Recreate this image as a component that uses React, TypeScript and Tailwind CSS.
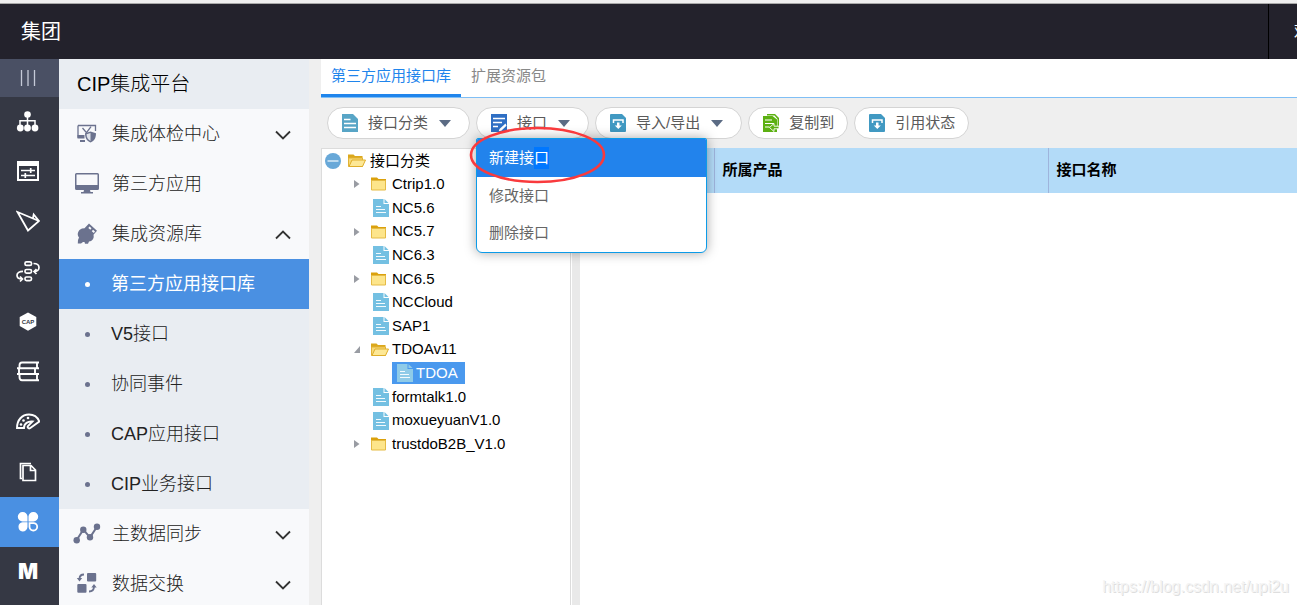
import { useState } from 'react'
import type { ReactNode } from 'react'
import clsx from 'clsx'

type TreeNode = { name: string; kind: 'folder' | 'open' | 'doc'; level: number }

const TREE: TreeNode[] = [
  { name: '接口分类', kind: 'open', level: 0 },
  { name: 'Ctrip1.0', kind: 'folder', level: 1 },
  { name: 'NC5.6', kind: 'doc', level: 1 },
  { name: 'NC5.7', kind: 'folder', level: 1 },
  { name: 'NC6.3', kind: 'doc', level: 1 },
  { name: 'NC6.5', kind: 'folder', level: 1 },
  { name: 'NCCloud', kind: 'doc', level: 1 },
  { name: 'SAP1', kind: 'doc', level: 1 },
  { name: 'TDOAv11', kind: 'open', level: 1 },
  { name: 'TDOA', kind: 'doc', level: 2 },
  { name: 'formtalk1.0', kind: 'doc', level: 1 },
  { name: 'moxueyuanV1.0', kind: 'doc', level: 1 },
  { name: 'trustdoB2B_V1.0', kind: 'folder', level: 1 },
]

const SUB_ITEMS = ['第三方应用接口库', 'V5接口', '协同事件', 'CAP应用接口', 'CIP业务接口']

// Left rail icons, 24x24
const RAIL: { label: string; icon: ReactNode }[] = [
  {
    label: '组织',
    icon: (
      <>
        <path d="M11.5 5v10M4 16v-5.3h15V16" strokeWidth="1.5" />
        <g fill="#fff" stroke="none">
          <circle cx="11.5" cy="4.5" r="3.3" />
          <circle cx="4.3" cy="18" r="3.4" />
          <circle cx="11.5" cy="18" r="3.4" />
          <circle cx="19" cy="18" r="3.4" />
        </g>
      </>
    ),
  },
  {
    label: '设置',
    icon: (
      <>
        <path d="M1 1h22v20H1zM3 6v13h18V6z" fill="#fff" fillRule="evenodd" stroke="none" />
        <path d="M5 10.5h14M5 15.5h14M14.7 8v5M9.3 13v5" strokeWidth="1.7" />
      </>
    ),
  },
  { label: '发送', icon: <path d="M1.5 2 23 11 12 20.5zM16.7 9.2l1-4.700L23 11" strokeWidth="1.800" /> },
  {
    label: '流程',
    icon: (
      <>
        <rect x="9" y="1.800" width="6.500" height="3.600" rx="1.500" />
        <rect x="9" y="9.500" width="6.500" height="3.600" rx="1.500" />
        <rect x="9" y="17" width="6.500" height="3.600" rx="1.500" />
        <path d="M17.500 3.500c3.500 0 5.500 1.700 5.500 4s-2 4-4.500 4M20.500 9l-2.500 2.500 2.500 2.500M7 11.300c-3.500 0-6 1.500-6 4 0 2.200 1.500 3.700 5 3.700M4 16.500l2.500 2.500L4 21.500" />
      </>
    ),
  },
  {
    label: 'CAP',
    icon: (
      <>
        <path d="M12 2.500 20.300 7v9L12 20.800 3.700 16V7z" fill="#fff" stroke="none" />
        <text x="12" y="14" fontSize="6" fontWeight="700" textAnchor="middle" fill="#353844" stroke="none">CAP</text>
      </>
    ),
  },
  {
    label: '文库',
    icon: (
      <path
        d="M23 2.500H6q-2.500 0-2.500 3v2.700M21 2.500v5.700M1 8.200h22M3 8.200v5.800M19 8.200v5.800M1 14h22M3.500 14v3q0 3.200 2.500 3.200h17M21 14v6"
        strokeWidth="1.900"
      />
    ),
  },
  {
    label: '仪表',
    icon: (
      <>
        <path d="M1 18c0-8 5-13.500 12-13.500 4.500 0 8.500 2.500 10.300 7L14 18.200c-1.500.800-3-.700-2-2.200l4.500-4.500C12 11 8 13.500 8 18z" strokeWidth="1.900" />
        <g fill="#fff" stroke="none">
          <circle cx="5" cy="14.500" r="1.300" />
          <circle cx="7.500" cy="10.500" r="1.300" />
          <circle cx="12" cy="8" r="1.300" />
        </g>
      </>
    ),
  },
  {
    label: '文档',
    icon: <path d="M7 5.500h8l4.500 4.500v10.500H7zM14.500 6v4.500h5M6 18.500H4.500V3.500h10.500" strokeWidth="1.700" />,
  },
  {
    label: '应用',
    icon: (
      <>
        <g fill="#fff" stroke="none">
          <path d="M6.500 2a4.700 4.700 0 0 0 0 9.400h5V6.500A4.700 4.700 0 0 0 6.500 2z" />
          <path d="M17.500 2a4.700 4.700 0 0 1 0 9.400h-5V6.500A4.700 4.700 0 0 1 17.500 2z" />
          <path d="M6.500 21.500a4.700 4.700 0 0 1 0-9.300h5V17a4.700 4.700 0 0 1-5 4.500z" />
        </g>
        <path d="M17.500 20.500a3.700 3.700 0 0 0 0-7.400h-4V17a3.700 3.700 0 0 0 4 3.500z" strokeWidth="1.800" />
      </>
    ),
  },
  {
    label: 'M',
    icon: (
      <text x="12" y="19" fontFamily="Inter" fontSize="21" fontWeight="900" textAnchor="middle" fill="#fff" stroke="none">M</text>
    ),
  },
]

function Chevron({ up }: { up?: boolean }) {
  return (
    <svg viewBox="0 0 16 10" className="ml-auto mt-[2px] h-[10px] w-4" fill="none" stroke="#333" strokeWidth="1.8">
      <path d={up ? 'M1 8.500 8 1.500l7 7' : 'M1 1.500 8 8.500l7-7'} />
    </svg>
  )
}

function MenuItem({ label, icon, chevron }: { label: string; icon: ReactNode; chevron?: 'up' | 'down' }) {
  return (
    <button className="flex h-[50px] w-full shrink-0 items-center pl-[14px] pr-[18px] text-left text-lg font-light text-[#222]">
      <svg viewBox="0 0 28 28" className="mr-[11px] size-7 shrink-0" fill="#6b728e" stroke="#6b728e" strokeWidth="0">
        {icon}
      </svg>
      {label}
      {chevron && <Chevron up={chevron === 'up'} />}
    </button>
  )
}

function Folder({ open }: { open?: boolean }) {
  return (
    <svg viewBox="0 0 18 16" className="h-4 w-[18px] shrink-0">
      {open ? (
        <>
          <path d="M0 1.500h5.500L7 3h7.500v4H0z" fill="#dba81c" />
          <path d="M.5 5h14v8.500H.5z" fill="#f7d978" stroke="#e2b336" />
          <path d="M4 7h13.500l-3 6.500H1z" fill="#fde896" stroke="#dfae2a" />
        </>
      ) : (
        <>
          <path d="M0 1.500h6L7.500 3H15v3H0z" fill="#dba10c" />
          <path d="M.5 4.500h14v9.500H.5z" fill="#fde58b" stroke="#e5bb45" />
        </>
      )}
    </svg>
  )
}

function Doc({ light }: { light?: boolean }) {
  return (
    <svg viewBox="0 0 16 18" className="h-[18px] w-4 shrink-0">
      <path d="M0 0h10.500v5H16v13H0z" fill={light ? '#8fcbe8' : '#74c0e2'} />
      <path d="M11.500 0 15.500 4h-4z" fill={light ? '#8fcbe8' : '#74c0e2'} />
      <path d="M3 7.500h5M3 10.500h9M3 13.500h10" stroke="#f2fafd" strokeWidth="1.200" />
    </svg>
  )
}

function TreeRow({ node, selected, onSelect }: { node: TreeNode; selected: boolean; onSelect: () => void }) {
  const icon = node.kind === 'doc' ? <Doc light={selected} /> : <Folder open={node.kind === 'open'} />

  return (
    <li
      role="treeitem"
      aria-level={node.level + 1}
      aria-selected={selected}
      className={clsx(
        'flex min-h-0 flex-1 items-center',
        node.level === 0 && 'pl-[3px]',
        node.level === 1 && 'pl-8',
        node.level === 2 && 'pl-[70px]',
      )}
    >
      {node.level === 0 && (
        <svg viewBox="0 0 16 16" className="mr-[7px] size-4">
          <circle cx="8" cy="8" r="8" fill="#68a8d8" />
          <path d="M2.500 8h11" stroke="#d8ebf7" strokeWidth="1.500" />
        </svg>
      )}
      {node.level === 1 && (
        <svg viewBox="0 0 6 8" className="mr-[11px] h-2 w-[6px]" fill="#999ca3">
          {node.kind === 'folder' && <path d="M0 0v8l5.500-4z" />}
          {node.kind === 'open' && <path d="M6 0v7H0z" />}
        </svg>
      )}
      <button
        onClick={onSelect}
        className={clsx('flex h-[22px] items-center whitespace-nowrap', selected && 'bg-[#4a99ee] pl-[5px] pr-[7px] text-white')}
      >
        <span className={clsx('flex justify-end', node.level === 2 ? 'mr-[3px]' : node.level === 0 ? 'mr-1 w-[18px]' : 'mr-[3px] w-[18px]')}>
          {icon}
        </span>
        {node.name}
      </button>
    </li>
  )
}

function ToolButton({ label, icon, menu }: { label: string; icon: ReactNode; menu?: boolean }) {
  return (
    <button
      aria-haspopup={menu ? 'menu' : undefined}
      className="flex h-8 items-center whitespace-nowrap rounded-full border border-[#d4d4d4] bg-white pl-[14px] pr-[13px] text-[#5a5a5a]"
    >
      <svg viewBox="0 0 16 18" className="mr-[10px] h-[18px] w-4 shrink-0">{icon}</svg>
      {label}
      {menu && (
        <svg viewBox="0 0 12 7" className="ml-[11px] mr-[5px] h-[7px] w-3" fill="#5b6b84">
          <path d="M0 0h12L6 7z" />
        </svg>
      )}
    </button>
  )
}

const DISK_ICON = (
  <>
    <path d="M1 0h11l4 4v13q0 1-1 1H1q-1 0-1-1V1q0-1 1-1z" fill="#4199c2" />
    <path d="M3.500 9V6h9.500v3" stroke="#fff" strokeWidth="1.500" fill="none" />
    <path d="M7 8.500h2.500v3h2.300l-3.500 3.500-3.500-3.500H7z" fill="#fff" />
  </>
)

export default function App() {
  const [sub, setSub] = useState(SUB_ITEMS[0])
  const [node, setNode] = useState('TDOA')

  return (
    <div className="relative flex h-screen flex-col overflow-hidden bg-[#efefef] font-['Liberation_Sans','Noto_Sans_CJK_SC',sans-serif] text-[15px] text-black">
      <div className="h-1 shrink-0 border-b border-[#a9a9a9]" />
      <header className="flex h-[55px] shrink-0 items-center overflow-hidden bg-[#23222c] text-white">
        <h1 className="flex-1 pl-[21px] text-xl font-normal">集团</h1>
        <div className="flex h-full w-[29px] items-center overflow-hidden border-l border-black pl-[25px]">
          <span className="text-base">欢</span>
        </div>
      </header>

      <div className="flex min-h-0 flex-1">
        <nav className="flex w-[59px] shrink-0 flex-col overflow-hidden bg-[#353844]">
          <button aria-label="菜单" className="flex h-[38px] shrink-0 items-center justify-center bg-[#4a5064] pr-1">
            <svg viewBox="0 0 16 16" className="size-4" stroke="#c5cad8" strokeWidth="1.300">
              <path d="M1.500 0v16M8 0v16M14.500 0v16" />
            </svg>
          </button>
          {RAIL.map(item => (
            <a
              key={item.label}
              href="#"
              aria-label={item.label}
              className={clsx('flex h-[50px] shrink-0 items-center justify-center pr-[3px]', item.label === '应用' && 'bg-[#4a90e2]')}
            >
              <svg viewBox="0 0 24 24" className="size-6" fill="none" stroke="#fff" strokeWidth="1.700">
                {item.icon}
              </svg>
            </a>
          ))}
        </nav>

        <aside className="flex w-[250px] shrink-0 flex-col overflow-hidden bg-[#f8f9fb]">
          <h2 className="flex h-[50px] shrink-0 items-center bg-[#e9edf2] pl-[18px] text-xl font-light">CIP集成平台</h2>
          <MenuItem
            label="集成体检中心"
            chevron="down"
            icon={
              <>
                <path d="M5 5.500h17.500V11M5 5.500v11.500h6" fill="none" strokeWidth="1.300" />
                <path d="M4.500 15h7v3.500h-7zM7 20h5v2H7z" />
                <path d="M9.500 8l4 4.700 4.500-6" fill="none" strokeWidth="1.300" />
                <path d="M17.500 11.500l5.500 1.800c0 4.500-1.500 7.500-5.500 9.200-4-1.700-5.500-4.700-5.500-9.200z" />
                <path d="M17.500 13v8c-2.700-1.400-3.900-3.500-4-6.700z" fill="#dfe3ea" />
              </>
            }
          />
          <MenuItem
            label="第三方应用"
            icon={
              <>
                <path d="M3.500 3h21Q26 3 26 4.500v14q0 1.500-1.500 1.500h-21Q2 20 2 18.500v-14Q2 3 3.500 3zM3.500 4.500V15h21V4.500z" fillRule="evenodd" />
                <path d="M11 20h6l.5 2H20v1.500H8V22h2.500z" />
              </>
            }
          />
          <MenuItem
            label="集成资源库"
            chevron="up"
            icon={
              <>
                <path d="M16 3.500l8 7.200-3.500 4c1 4-1.500 6.500-4.500 6.800l-1 2.200h-3l-.5-1.700H10L8 23.500H4.800L5 20l1-2.500c-2.500-3-1-7.500 3-9l2.500-.3z" />
                <path d="M16.500 6.500l2 1.800-1.200 1.400-2-1.800zM20 9.800l2 1.800-1.200 1.400-2-1.800z" fill="#f8f9fb" />
              </>
            }
          />
          <ul className="shrink-0 bg-[#e9edf2] text-lg font-light">
            {SUB_ITEMS.map(label => (
              <li key={label}>
                <button
                  onClick={() => setSub(label)}
                  className={clsx('flex h-[50px] w-full items-center pl-[26px] text-left', sub === label ? 'bg-[#4a90e2] font-normal text-white' : 'text-[#222]')}
                >
                  <span className={clsx('mr-[21px] size-[5px] rounded-full', sub === label ? 'bg-white' : 'bg-[#6b728e]')} />
                  {label}
                </button>
              </li>
            ))}
          </ul>
          <MenuItem
            label="主数据同步"
            chevron="down"
            icon={
              <>
                <path d="M3.500 20.300l6.800-10.600 6.700 7.600 7-10.600" fill="none" strokeWidth="2" />
                <circle cx="3.700" cy="20.300" r="3.200" />
                <circle cx="10.300" cy="9.700" r="3.200" />
                <circle cx="17" cy="17.300" r="3.200" />
                <circle cx="24" cy="6.700" r="3.200" />
              </>
            }
          />
          <MenuItem
            label="数据交换"
            chevron="down"
            icon={
              <>
                <rect x="14" y="3" width="9.200" height="8.500" rx="1" />
                <rect x="4.300" y="14" width="9.200" height="8.800" rx="1" />
                <path d="M11 4.500c-3 0-4.500 1.500-4.500 4.500M16 21.500c3.500 0 5-1.500 5-5" fill="none" strokeWidth="1.800" />
                <path d="M3.800 8h5.400l-2.700 3.500zM18.300 17.500h5.400L21 14z" />
              </>
            }
          />
        </aside>

        <main className="ml-3 flex min-w-0 flex-1 flex-col">
          <div role="tablist" className="flex h-[39px] shrink-0 items-stretch border-b border-[#80bff5] bg-white">
            <button role="tab" aria-selected="true" className="border-b-3 border-[#1f85ec] px-[10px] text-[#1f85ec]">
              第三方应用接口库
            </button>
            <button role="tab" aria-selected="false" className="border-b-3 border-transparent px-[10px] text-[#888]">
              扩展资源包
            </button>
          </div>

          <div className="flex h-[50px] shrink-0 items-center gap-[6px] pl-[6px]">
            <ToolButton
              label="接口分类"
              menu
              icon={
                <>
                  <path d="M0 0h11l5 5v13H0z" fill="#58a5c6" />
                  <path d="M2 5.500h6.500M2 9.500h12M2 13.500h12" stroke="#fff" strokeWidth="1.400" />
                </>
              }
            />
            <div className="relative">
              <ToolButton
                label="接口"
                menu
                icon={
                  <>
                    <path d="M0 0h16v18H0z" fill="#2f6fc4" />
                    <path d="M2 4.500h12M2 8.500h9M2 12.500h5" stroke="#fff" strokeWidth="1.400" />
                    <path d="M14.500 9.500 8.500 15l-.8 2.300 2.600-.6 5.200-5z" fill="#fff" />
                  </>
                }
              />
              <div
                role="menu"
                className="absolute left-0 top-[31px] z-10 w-[231px] overflow-hidden rounded-b-md rounded-t-xs border border-[#0c9be8] bg-white text-[#666] shadow-[0_0_12px_rgba(0,0,0,0.35)]"
              >
                <button role="menuitem" className="flex h-[38px] w-full items-center bg-[#2283ec] pl-3 text-white">
                  新建接<span className="bg-[#0077ff]">口</span>
                </button>
                <button role="menuitem" className="flex h-[38px] w-full items-center pl-3">修改接口</button>
                <button role="menuitem" className="flex h-[37px] w-full items-center pl-3">删除接口</button>
              </div>
              {/* red marker round the first entry */}
              <svg viewBox="0 0 138 60" className="pointer-events-none absolute -left-2 top-[18px] z-20 h-[60px] w-[138px]">
                <ellipse cx="69.500" cy="30" rx="66.500" ry="27" fill="none" stroke="#f93a3d" strokeWidth="2.600" />
              </svg>
            </div>
            <ToolButton label="导入/导出" menu icon={DISK_ICON} />
            <ToolButton
              label="复制到"
              icon={
                <>
                  <path d="M4 0h8l4 4v9h-1.500V5l-3-3.500H4z" fill="#5cb012" />
                  <path d="M0 2h9.500L14 5.500V18H0z" fill="#5cb012" />
                  <path d="M2 6h7M2 9.500h9M2 13h4.500" stroke="#fff" strokeWidth="1.200" />
                  <path d="M6.500 13.500 11 9.500v2.700h5v2.600h-5v2.700z" fill="#5cb012" stroke="#fff" strokeWidth=".9" />
                </>
              }
            />
            <ToolButton label="引用状态" icon={DISK_ICON} />
          </div>

          <div className="flex min-h-0 flex-1 bg-white">
            <div className="w-[250px] shrink-0 border border-b-0 border-[#dcdcdc]">
              <ul role="tree" className="flex h-[307px] flex-col">
                {TREE.map(n => (
                  <TreeRow key={n.name} node={n} selected={node === n.name} onSelect={() => setNode(n.name)} />
                ))}
              </ul>
            </div>
            <div className="ml-px w-2 shrink-0 bg-[#e9e9e9]" />
            <div className="min-w-0 flex-1">
              <table className="w-full table-fixed border-collapse text-left">
                <thead>
                  <tr className="h-[45px] bg-[#b3dbf8]">
                    <th className="w-[134px] border-r border-[#9eb4dc]" />
                    <th className="w-[334px] border-r border-[#9eb4dc] px-2 font-bold">所属产品</th>
                    <th className="px-2 font-bold">接口名称</th>
                  </tr>
                </thead>
                <tbody />
              </table>
            </div>
          </div>
        </main>
      </div>

      <span className="pointer-events-none absolute bottom-[6px] right-2 text-base text-[#f4f4f4] [text-shadow:1px_1px_0_#dedede]">
        https://blog.csdn.net/upi2u
      </span>
    </div>
  )
}
